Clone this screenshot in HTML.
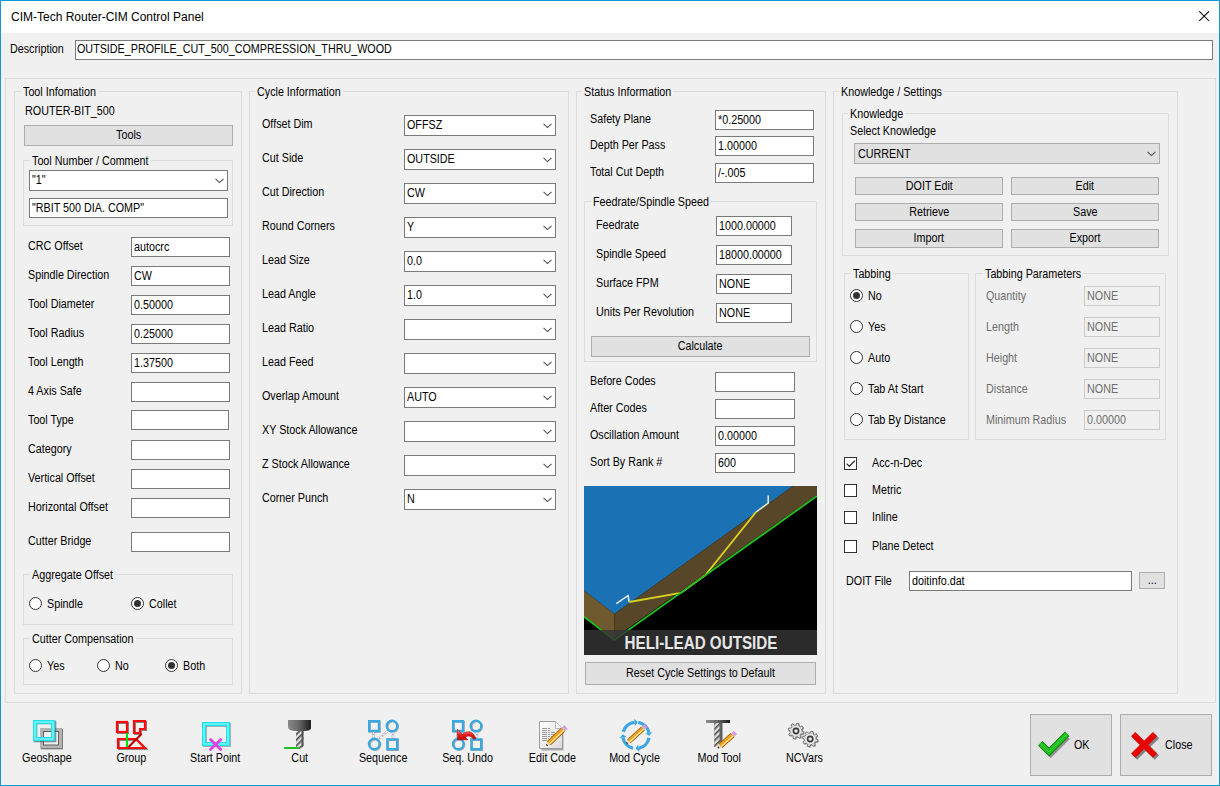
<!DOCTYPE html><html><head><meta charset="utf-8"><title>CIM-Tech Router-CIM Control Panel</title><style>
*{margin:0;padding:0;box-sizing:border-box}
html,body{width:1220px;height:786px;overflow:hidden;background:#f0f0f0}
body{position:relative;font-family:"Liberation Sans",sans-serif;color:#000}
.win{position:absolute;left:0;top:0;width:1220px;height:786px;background:#f0f0f0}
.bdr{position:absolute;left:0;top:0;width:1220px;height:786px;border:1px solid #1196d8;pointer-events:none}
.title{position:absolute;left:1px;top:1px;width:1218px;height:32px;background:#fff}
.t{position:absolute;white-space:nowrap;font-size:12.5px;line-height:14px;}
.t span{display:inline-block;transform:scaleX(0.86);transform-origin:0 0}
.tc{position:absolute;white-space:nowrap;font-size:12.5px;line-height:14px;text-align:center}
.tc span{display:inline-block;transform:scaleX(0.86);transform-origin:50% 0}
.lg{position:absolute;white-space:nowrap;font-size:12.5px;line-height:14px;background:#f0f0f0;padding:0 2px;color:#000}
.lg span{display:inline-block;transform:scaleX(0.86);transform-origin:0 0}
.grp{position:absolute;border:1px solid #dcdcdc}
.inp{position:absolute;border:1px solid #7a7a7a;background:#fff}
.dis{position:absolute;border:1px solid #cccccc;background:#f0f0f0}
.btn{position:absolute;border:1px solid #adadad;background:#e1e1e1}
.rad{position:absolute;width:13px;height:13px;border:1px solid #333;border-radius:50%;background:#fff}
.rad i{position:absolute;left:2px;top:2px;width:7px;height:7px;border-radius:50%;background:#333}
.chk{position:absolute;width:13px;height:13px;border:1px solid #333;background:#fff}
svg{display:block}
</style></head><body><div class="win">
<div class="title"></div>
<div class="t" style="left:11px;top:10px;font-size:12px;line-height:14px"><span style="transform:none">CIM-Tech Router-CIM Control Panel</span></div>
<svg style="position:absolute;left:1199px;top:11px" width="11" height="11" viewBox="0 0 11 11"><path d="M0.3 0.3 L10 10 M10 0.3 L0.3 10" stroke="#000" stroke-width="1.05"/></svg>
<div class="t" style="left:10px;top:42px;"><span>Description</span></div>
<div class="inp" style="left:75px;top:40px;width:1138px;height:20px;"></div>
<div class="t" style="left:77px;top:42px;"><span>OUTSIDE_PROFILE_CUT_500_COMPRESSION_THRU_WOOD</span></div>
<div class="grp" style="left:5px;top:78px;width:1211px;height:625px;"></div>
<div class="grp" style="left:14px;top:91px;width:228px;height:603px;"></div>
<div class="lg" style="left:21px;top:85px;width:76.9px;overflow:hidden"><span>Tool Infomation</span></div>
<div class="t" style="left:25px;top:104px;"><span>ROUTER-BIT_500</span></div>
<div class="btn" style="left:24px;top:125px;width:209px;height:21px;"></div>
<div class="tc" style="left:24px;width:209px;top:128px;"><span>Tools</span></div>
<div class="grp" style="left:23px;top:160px;width:210px;height:66px;"></div>
<div class="lg" style="left:30px;top:154px;width:120.5px;overflow:hidden"><span>Tool Number / Comment</span></div>
<div class="inp" style="left:29px;top:170px;width:199px;height:21px;"></div>
<div class="t" style="left:32px;top:173px;"><span>"1"</span></div>
<div style="position:absolute;left:215px;top:178px;width:9px;height:6px"><svg width="9" height="6" viewBox="0 0 9 6"><path d="M0.5 0.8 L4.5 4.6 L8.5 0.8" fill="none" stroke="#505050" stroke-width="1.1"/></svg></div>
<div class="inp" style="left:29px;top:198px;width:199px;height:20px;"></div>
<div class="t" style="left:32px;top:201px;"><span>"RBIT 500 DIA. COMP"</span></div>
<div class="t" style="left:28px;top:239px;"><span>CRC Offset</span></div>
<div class="inp" style="left:131px;top:237px;width:99px;height:20px;"></div>
<div class="t" style="left:134px;top:240px;"><span>autocrc</span></div>
<div class="t" style="left:28px;top:268px;"><span>Spindle Direction</span></div>
<div class="inp" style="left:131px;top:266px;width:99px;height:20px;"></div>
<div class="t" style="left:134px;top:269px;"><span>CW</span></div>
<div class="t" style="left:28px;top:297px;"><span>Tool Diameter</span></div>
<div class="inp" style="left:131px;top:295px;width:99px;height:20px;"></div>
<div class="t" style="left:134px;top:298px;"><span>0.50000</span></div>
<div class="t" style="left:28px;top:326px;"><span>Tool Radius</span></div>
<div class="inp" style="left:131px;top:324px;width:99px;height:20px;"></div>
<div class="t" style="left:134px;top:327px;"><span>0.25000</span></div>
<div class="t" style="left:28px;top:355px;"><span>Tool Length</span></div>
<div class="inp" style="left:131px;top:353px;width:99px;height:20px;"></div>
<div class="t" style="left:134px;top:356px;"><span>1.37500</span></div>
<div class="t" style="left:28px;top:384px;"><span>4 Axis Safe</span></div>
<div class="inp" style="left:131px;top:382px;width:99px;height:20px;"></div>
<div class="t" style="left:28px;top:413px;"><span>Tool Type</span></div>
<div class="inp" style="left:131px;top:410px;width:98px;height:20px;"></div>
<div class="t" style="left:28px;top:442px;"><span>Category</span></div>
<div class="inp" style="left:131px;top:440px;width:99px;height:20px;"></div>
<div class="t" style="left:28px;top:471px;"><span>Vertical Offset</span></div>
<div class="inp" style="left:131px;top:469px;width:99px;height:20px;"></div>
<div class="t" style="left:28px;top:500px;"><span>Horizontal Offset</span></div>
<div class="inp" style="left:131px;top:498px;width:99px;height:20px;"></div>
<div class="t" style="left:28px;top:534px;"><span>Cutter Bridge</span></div>
<div class="inp" style="left:131px;top:532px;width:99px;height:20px;"></div>
<div class="grp" style="left:23px;top:574px;width:210px;height:51px;"></div>
<div class="lg" style="left:30px;top:568px;width:85.1px;overflow:hidden"><span>Aggregate Offset</span></div>
<div class="rad" style="left:29px;top:597px"></div>
<div class="t" style="left:47px;top:597px;"><span>Spindle</span></div>
<div class="rad" style="left:131px;top:597px"><i></i></div>
<div class="t" style="left:149px;top:597px;"><span>Collet</span></div>
<div class="grp" style="left:23px;top:638px;width:210px;height:47px;"></div>
<div class="lg" style="left:30px;top:632px;width:105.6px;overflow:hidden"><span>Cutter Compensation</span></div>
<div class="rad" style="left:29px;top:659px"></div>
<div class="t" style="left:47px;top:659px;"><span>Yes</span></div>
<div class="rad" style="left:97px;top:659px"></div>
<div class="t" style="left:115px;top:659px;"><span>No</span></div>
<div class="rad" style="left:165px;top:659px"><i></i></div>
<div class="t" style="left:183px;top:659px;"><span>Both</span></div>
<div class="grp" style="left:249px;top:91px;width:320px;height:603px;"></div>
<div class="lg" style="left:255px;top:85px;width:87.6px;overflow:hidden"><span>Cycle Information</span></div>
<div class="t" style="left:262px;top:117px;"><span>Offset Dim</span></div>
<div class="inp" style="left:404px;top:115px;width:152px;height:21px;"></div>
<div class="t" style="left:407px;top:118px;"><span>OFFSZ</span></div>
<div style="position:absolute;left:543px;top:123px;width:9px;height:6px"><svg width="9" height="6" viewBox="0 0 9 6"><path d="M0.5 0.8 L4.5 4.6 L8.5 0.8" fill="none" stroke="#505050" stroke-width="1.1"/></svg></div>
<div class="t" style="left:262px;top:151px;"><span>Cut Side</span></div>
<div class="inp" style="left:404px;top:149px;width:152px;height:21px;"></div>
<div class="t" style="left:407px;top:152px;"><span>OUTSIDE</span></div>
<div style="position:absolute;left:543px;top:157px;width:9px;height:6px"><svg width="9" height="6" viewBox="0 0 9 6"><path d="M0.5 0.8 L4.5 4.6 L8.5 0.8" fill="none" stroke="#505050" stroke-width="1.1"/></svg></div>
<div class="t" style="left:262px;top:185px;"><span>Cut Direction</span></div>
<div class="inp" style="left:404px;top:183px;width:152px;height:21px;"></div>
<div class="t" style="left:407px;top:186px;"><span>CW</span></div>
<div style="position:absolute;left:543px;top:191px;width:9px;height:6px"><svg width="9" height="6" viewBox="0 0 9 6"><path d="M0.5 0.8 L4.5 4.6 L8.5 0.8" fill="none" stroke="#505050" stroke-width="1.1"/></svg></div>
<div class="t" style="left:262px;top:219px;"><span>Round Corners</span></div>
<div class="inp" style="left:404px;top:217px;width:152px;height:21px;"></div>
<div class="t" style="left:407px;top:220px;"><span>Y</span></div>
<div style="position:absolute;left:543px;top:225px;width:9px;height:6px"><svg width="9" height="6" viewBox="0 0 9 6"><path d="M0.5 0.8 L4.5 4.6 L8.5 0.8" fill="none" stroke="#505050" stroke-width="1.1"/></svg></div>
<div class="t" style="left:262px;top:253px;"><span>Lead Size</span></div>
<div class="inp" style="left:404px;top:251px;width:152px;height:21px;"></div>
<div class="t" style="left:407px;top:254px;"><span>0.0</span></div>
<div style="position:absolute;left:543px;top:259px;width:9px;height:6px"><svg width="9" height="6" viewBox="0 0 9 6"><path d="M0.5 0.8 L4.5 4.6 L8.5 0.8" fill="none" stroke="#505050" stroke-width="1.1"/></svg></div>
<div class="t" style="left:262px;top:287px;"><span>Lead Angle</span></div>
<div class="inp" style="left:404px;top:285px;width:152px;height:21px;"></div>
<div class="t" style="left:407px;top:288px;"><span>1.0</span></div>
<div style="position:absolute;left:543px;top:293px;width:9px;height:6px"><svg width="9" height="6" viewBox="0 0 9 6"><path d="M0.5 0.8 L4.5 4.6 L8.5 0.8" fill="none" stroke="#505050" stroke-width="1.1"/></svg></div>
<div class="t" style="left:262px;top:321px;"><span>Lead Ratio</span></div>
<div class="inp" style="left:404px;top:319px;width:152px;height:21px;"></div>
<div style="position:absolute;left:543px;top:327px;width:9px;height:6px"><svg width="9" height="6" viewBox="0 0 9 6"><path d="M0.5 0.8 L4.5 4.6 L8.5 0.8" fill="none" stroke="#505050" stroke-width="1.1"/></svg></div>
<div class="t" style="left:262px;top:355px;"><span>Lead Feed</span></div>
<div class="inp" style="left:404px;top:353px;width:152px;height:21px;"></div>
<div style="position:absolute;left:543px;top:361px;width:9px;height:6px"><svg width="9" height="6" viewBox="0 0 9 6"><path d="M0.5 0.8 L4.5 4.6 L8.5 0.8" fill="none" stroke="#505050" stroke-width="1.1"/></svg></div>
<div class="t" style="left:262px;top:389px;"><span>Overlap Amount</span></div>
<div class="inp" style="left:404px;top:387px;width:152px;height:21px;"></div>
<div class="t" style="left:407px;top:390px;"><span>AUTO</span></div>
<div style="position:absolute;left:543px;top:395px;width:9px;height:6px"><svg width="9" height="6" viewBox="0 0 9 6"><path d="M0.5 0.8 L4.5 4.6 L8.5 0.8" fill="none" stroke="#505050" stroke-width="1.1"/></svg></div>
<div class="t" style="left:262px;top:423px;"><span>XY Stock Allowance</span></div>
<div class="inp" style="left:404px;top:421px;width:152px;height:21px;"></div>
<div style="position:absolute;left:543px;top:429px;width:9px;height:6px"><svg width="9" height="6" viewBox="0 0 9 6"><path d="M0.5 0.8 L4.5 4.6 L8.5 0.8" fill="none" stroke="#505050" stroke-width="1.1"/></svg></div>
<div class="t" style="left:262px;top:457px;"><span>Z Stock Allowance</span></div>
<div class="inp" style="left:404px;top:455px;width:152px;height:21px;"></div>
<div style="position:absolute;left:543px;top:463px;width:9px;height:6px"><svg width="9" height="6" viewBox="0 0 9 6"><path d="M0.5 0.8 L4.5 4.6 L8.5 0.8" fill="none" stroke="#505050" stroke-width="1.1"/></svg></div>
<div class="t" style="left:262px;top:491px;"><span>Corner Punch</span></div>
<div class="inp" style="left:404px;top:489px;width:152px;height:21px;"></div>
<div class="t" style="left:407px;top:492px;"><span>N</span></div>
<div style="position:absolute;left:543px;top:497px;width:9px;height:6px"><svg width="9" height="6" viewBox="0 0 9 6"><path d="M0.5 0.8 L4.5 4.6 L8.5 0.8" fill="none" stroke="#505050" stroke-width="1.1"/></svg></div>
<div class="grp" style="left:576px;top:91px;width:250px;height:603px;"></div>
<div class="lg" style="left:582px;top:85px;width:91.2px;overflow:hidden"><span>Status Information</span></div>
<div class="t" style="left:590px;top:112px;"><span>Safety Plane</span></div>
<div class="inp" style="left:715px;top:110px;width:99px;height:20px;"></div>
<div class="t" style="left:718px;top:113px;"><span>*0.25000</span></div>
<div class="t" style="left:590px;top:138px;"><span>Depth Per Pass</span></div>
<div class="inp" style="left:715px;top:136px;width:99px;height:20px;"></div>
<div class="t" style="left:718px;top:139px;"><span>1.00000</span></div>
<div class="t" style="left:590px;top:165px;"><span>Total Cut Depth</span></div>
<div class="inp" style="left:715px;top:163px;width:99px;height:20px;"></div>
<div class="t" style="left:718px;top:166px;"><span>/-.005</span></div>
<div class="grp" style="left:584px;top:201px;width:233px;height:161px;"></div>
<div class="lg" style="left:591px;top:195px;width:120.0px;overflow:hidden"><span>Feedrate/Spindle Speed</span></div>
<div class="t" style="left:596px;top:218px;"><span>Feedrate</span></div>
<div class="inp" style="left:716px;top:216px;width:76px;height:20px;"></div>
<div class="t" style="left:719px;top:219px;"><span>1000.00000</span></div>
<div class="t" style="left:596px;top:247px;"><span>Spindle Speed</span></div>
<div class="inp" style="left:716px;top:245px;width:76px;height:20px;"></div>
<div class="t" style="left:719px;top:248px;"><span>18000.00000</span></div>
<div class="t" style="left:596px;top:276px;"><span>Surface FPM</span></div>
<div class="inp" style="left:716px;top:274px;width:76px;height:20px;"></div>
<div class="t" style="left:719px;top:277px;"><span>NONE</span></div>
<div class="t" style="left:596px;top:305px;"><span>Units Per Revolution</span></div>
<div class="inp" style="left:716px;top:303px;width:76px;height:20px;"></div>
<div class="t" style="left:719px;top:306px;"><span>NONE</span></div>
<div class="btn" style="left:591px;top:336px;width:219px;height:21px;"></div>
<div class="tc" style="left:591px;width:219px;top:339px;"><span>Calculate</span></div>
<div class="t" style="left:590px;top:374px;"><span>Before Codes</span></div>
<div class="inp" style="left:715px;top:372px;width:80px;height:20px;"></div>
<div class="t" style="left:590px;top:401px;"><span>After Codes</span></div>
<div class="inp" style="left:715px;top:399px;width:80px;height:20px;"></div>
<div class="t" style="left:590px;top:428px;"><span>Oscillation Amount</span></div>
<div class="inp" style="left:715px;top:426px;width:80px;height:20px;"></div>
<div class="t" style="left:718px;top:429px;"><span>0.00000</span></div>
<div class="t" style="left:590px;top:455px;"><span>Sort By Rank #</span></div>
<div class="inp" style="left:715px;top:453px;width:80px;height:20px;"></div>
<div class="t" style="left:718px;top:456px;"><span>600</span></div>
<svg style="position:absolute;left:584px;top:486px" width="233" height="169" viewBox="0 0 233 169">
<rect x="0" y="0" width="233" height="169" fill="#000"/>
<polygon points="0,0 209,0 30.3,128 0,104.6" fill="#1a72b4"/>
<polygon points="0,104.6 30.3,128 30.3,152 0,130.7" fill="#6f5a30"/>
<polygon points="30.3,128 209,0 233,0 233,9 30.3,152" fill="#574627"/>
<polyline points="32.2,117.7 44.1,109.6 45.2,116" fill="none" stroke="#d8e6ec" stroke-width="1.6"/>
<polyline points="45.2,116 96.8,107 121.5,89 171.9,26.1" fill="none" stroke="#d6cf22" stroke-width="1.8"/>
<polyline points="171.9,26.1 184.2,17.2 184.2,9.6" fill="none" stroke="#dfe8c8" stroke-width="1.6"/>
<polyline points="0,130.7 30.3,154 233,10" fill="none" stroke="#1fc01f" stroke-width="1.8"/>
<rect x="0" y="144" width="233" height="25" fill="rgba(52,52,52,0.82)"/>
<text x="117" y="163" text-anchor="middle" font-family="Liberation Sans" font-weight="bold" font-size="18" fill="#e6e6e6" transform="translate(117 0) scale(0.845 1) translate(-117 0)">HELI-LEAD OUTSIDE</text>
</svg>

<div class="btn" style="left:585px;top:662px;width:231px;height:23px;"></div>
<div class="tc" style="left:585px;width:231px;top:666px;"><span>Reset Cycle Settings to Default</span></div>
<div class="grp" style="left:833px;top:91px;width:345px;height:603px;"></div>
<div class="lg" style="left:839px;top:85px;width:105.0px;overflow:hidden"><span>Knowledge / Settings</span></div>
<div class="grp" style="left:842px;top:113px;width:327px;height:143px;"></div>
<div class="lg" style="left:848px;top:107px;width:57.2px;overflow:hidden"><span>Knowledge</span></div>
<div class="t" style="left:850px;top:124px;"><span>Select Knowledge</span></div>
<div class="btn" style="left:854px;top:143px;width:306px;height:21px;"></div>
<div class="t" style="left:858px;top:147px;"><span>CURRENT</span></div>
<div style="position:absolute;left:1147px;top:151px;width:9px;height:6px"><svg width="9" height="6" viewBox="0 0 9 6"><path d="M0.5 0.8 L4.5 4.6 L8.5 0.8" fill="none" stroke="#505050" stroke-width="1.1"/></svg></div>
<div class="btn" style="left:855px;top:177px;width:148px;height:18px;"></div>
<div class="tc" style="left:855px;width:148px;top:179px;"><span>DOIT Edit</span></div>
<div class="btn" style="left:1011px;top:177px;width:148px;height:18px;"></div>
<div class="tc" style="left:1011px;width:148px;top:179px;"><span>Edit</span></div>
<div class="btn" style="left:855px;top:203px;width:148px;height:18px;"></div>
<div class="tc" style="left:855px;width:148px;top:205px;"><span>Retrieve</span></div>
<div class="btn" style="left:1011px;top:203px;width:148px;height:18px;"></div>
<div class="tc" style="left:1011px;width:148px;top:205px;"><span>Save</span></div>
<div class="btn" style="left:855px;top:229px;width:148px;height:19px;"></div>
<div class="tc" style="left:855px;width:148px;top:231px;"><span>Import</span></div>
<div class="btn" style="left:1011px;top:229px;width:148px;height:19px;"></div>
<div class="tc" style="left:1011px;width:148px;top:231px;"><span>Export</span></div>
<div class="grp" style="left:844px;top:273px;width:125px;height:167px;"></div>
<div class="lg" style="left:851px;top:267px;width:41.7px;overflow:hidden"><span>Tabbing</span></div>
<div class="rad" style="left:850px;top:289px"><i></i></div>
<div class="t" style="left:868px;top:289px;"><span>No</span></div>
<div class="rad" style="left:850px;top:320px"></div>
<div class="t" style="left:868px;top:320px;"><span>Yes</span></div>
<div class="rad" style="left:850px;top:351px"></div>
<div class="t" style="left:868px;top:351px;"><span>Auto</span></div>
<div class="rad" style="left:850px;top:382px"></div>
<div class="t" style="left:868px;top:382px;"><span>Tab At Start</span></div>
<div class="rad" style="left:850px;top:413px"></div>
<div class="t" style="left:868px;top:413px;"><span>Tab By Distance</span></div>
<div class="grp" style="left:975px;top:273px;width:191px;height:167px;"></div>
<div class="lg" style="left:983px;top:267px;width:100.2px;overflow:hidden"><span>Tabbing Parameters</span></div>
<div class="t" style="left:986px;top:289px;color:#6d6d6d;"><span>Quantity</span></div>
<div class="dis" style="left:1084px;top:286px;width:76px;height:20px;"></div>
<div class="t" style="left:1087px;top:289px;color:#6d6d6d;"><span>NONE</span></div>
<div class="t" style="left:986px;top:320px;color:#6d6d6d;"><span>Length</span></div>
<div class="dis" style="left:1084px;top:317px;width:76px;height:20px;"></div>
<div class="t" style="left:1087px;top:320px;color:#6d6d6d;"><span>NONE</span></div>
<div class="t" style="left:986px;top:351px;color:#6d6d6d;"><span>Height</span></div>
<div class="dis" style="left:1084px;top:348px;width:76px;height:20px;"></div>
<div class="t" style="left:1087px;top:351px;color:#6d6d6d;"><span>NONE</span></div>
<div class="t" style="left:986px;top:382px;color:#6d6d6d;"><span>Distance</span></div>
<div class="dis" style="left:1084px;top:379px;width:76px;height:20px;"></div>
<div class="t" style="left:1087px;top:382px;color:#6d6d6d;"><span>NONE</span></div>
<div class="t" style="left:986px;top:413px;color:#6d6d6d;"><span>Minimum Radius</span></div>
<div class="dis" style="left:1084px;top:410px;width:76px;height:20px;"></div>
<div class="t" style="left:1087px;top:413px;color:#6d6d6d;"><span>0.00000</span></div>
<div class="chk" style="left:844px;top:457px"><svg width="11" height="11" viewBox="0 0 11 11" style="position:absolute;left:0;top:0"><path d="M1.6 5.6 L4.3 8.3 L9.8 2.8" fill="none" stroke="#333" stroke-width="1.3"/></svg></div>
<div class="t" style="left:872px;top:456px;"><span>Acc-n-Dec</span></div>
<div class="chk" style="left:844px;top:484px"></div>
<div class="t" style="left:872px;top:483px;"><span>Metric</span></div>
<div class="chk" style="left:844px;top:511px"></div>
<div class="t" style="left:872px;top:510px;"><span>Inline</span></div>
<div class="chk" style="left:844px;top:540px"></div>
<div class="t" style="left:872px;top:539px;"><span>Plane Detect</span></div>
<div class="t" style="left:846px;top:574px;"><span>DOIT File</span></div>
<div class="inp" style="left:909px;top:571px;width:223px;height:20px;"></div>
<div class="t" style="left:912px;top:574px;"><span>doitinfo.dat</span></div>
<div class="btn" style="left:1139px;top:572px;width:26px;height:17px;"></div>
<div class="tc" style="left:1139px;width:26px;top:573px;"><span>...</span></div>
<svg style="position:absolute;left:0;top:700px" width="1220" height="86" viewBox="0 700 1220 86">
<defs>
<linearGradient id="collet" x1="0" y1="0" x2="1" y2="0"><stop offset="0" stop-color="#8a8a8a"/><stop offset="0.45" stop-color="#6a6a6a"/><stop offset="1" stop-color="#1e1e1e"/></linearGradient>
<linearGradient id="tbar" x1="0" y1="0" x2="1" y2="0"><stop offset="0" stop-color="#909090"/><stop offset="0.5" stop-color="#666"/><stop offset="1" stop-color="#1a1a1a"/></linearGradient>
<pattern id="flute" width="4" height="4" patternUnits="userSpaceOnUse" patternTransform="rotate(-45)"><rect width="4" height="4" fill="#e0e0e0"/><rect width="4" height="1.6" fill="#4a4a4a"/></pattern>
<linearGradient id="pen" x1="0" y1="0" x2="1" y2="1"><stop offset="0" stop-color="#fff6c0"/><stop offset="0.5" stop-color="#f6a81c"/><stop offset="1" stop-color="#d07800"/></linearGradient>
<linearGradient id="redarr" x1="0" y1="0" x2="0" y2="1"><stop offset="0" stop-color="#ff9a9a"/><stop offset="0.5" stop-color="#e82020"/><stop offset="1" stop-color="#c00000"/></linearGradient>
<linearGradient id="doc" x1="0" y1="0" x2="1" y2="1"><stop offset="0" stop-color="#ffffff"/><stop offset="1" stop-color="#dcdcdc"/></linearGradient>
</defs>
<!-- Geoshape -->
<rect x="42.3" y="730.3" width="19" height="17.5" fill="none" stroke="#5a5a5a" stroke-width="3"/>
<rect x="41.7" y="729.7" width="18.6" height="17" fill="none" stroke="#b4b4b4" stroke-width="3.4"/>
<rect x="43.5" y="731.5" width="15" height="13.5" fill="none" stroke="#606060" stroke-width="1"/>
<rect x="35.5" y="722.5" width="19" height="18" fill="none" stroke="#3a5060" stroke-width="3.6" opacity="0.6"/>
<rect x="35" y="722" width="18" height="17" fill="none" stroke="#1ee0ea" stroke-width="4"/>
<rect x="35" y="722" width="18" height="17" fill="none" stroke="#8ffcff" stroke-width="1.2"/>
<!-- Group -->
<g fill="none" stroke="#303030" stroke-width="2" opacity="0.55" transform="translate(1 1)">
<rect x="117" y="722" width="10" height="10"/>
<path d="M134 721 H145 V729 H140 V733 H134 Z"/>
<path d="M118 739 H136 L145 748 H118 Z"/>
</g>
<g fill="none" stroke="#ff0a0a" stroke-width="2.2">
<rect x="117" y="722" width="10" height="10"/>
<path d="M134 721 H145 V729 H140 V733 H134 Z"/>
<path d="M118 739 H136 L145 748 H118 Z"/>
</g>
<path d="M128.5 747 L141.5 734" stroke="#b80000" stroke-width="2.2"/>
<path d="M127 733 V747" stroke="#00e000" stroke-width="2"/>
<!-- Start Point -->
<rect x="205" y="725" width="24" height="20" fill="none" stroke="#3a5060" stroke-width="3.5" opacity="0.55"/>
<rect x="204" y="724" width="24" height="20" fill="none" stroke="#1ee0ea" stroke-width="4"/>
<rect x="204" y="724" width="24" height="20" fill="none" stroke="#8ffcff" stroke-width="1.2"/>
<path d="M210.5 739.5 L220.7 749.5 M220.7 739.5 L210.5 749.5" stroke="#e040e0" stroke-width="2.8" stroke-linecap="round"/>
<!-- Cut -->
<path d="M288 720 H311 V728 Q311 731 304 731 H297 Q288 731 288 727 Z" fill="url(#collet)"/>
<path d="M296 731 H303.5 V746 L300 749 H296 Z" fill="url(#flute)"/>
<path d="M301.5 731 H303.5 V746 L301.5 748 Z" fill="#555"/>
<path d="M285 748 H298.5" stroke="#20c020" stroke-width="2.2" stroke-linecap="round"/>
<!-- Sequence -->
<g id="seq">
<g fill="none" stroke="#555" stroke-width="2" opacity="0.45" transform="translate(0.8 0.8)">
<rect x="369" y="721" width="10" height="10"/><circle cx="392" cy="726" r="5.2"/><circle cx="374.3" cy="744" r="5.2"/><rect x="387.2" y="739.2" width="10" height="10"/>
</g>
<g fill="none" stroke="#8a8a8a" stroke-width="2.4" opacity="0.6">
<path d="M373.5 731.5 V738.5"/><path d="M377.5 740.5 L389 729.5"/><path d="M393 731.5 V738.5"/>
</g>
<g fill="none" stroke="#ffffff" stroke-width="1.3" stroke-dasharray="2.5 1.2">
<path d="M373.5 731.5 V738.5"/><path d="M377.5 740.5 L389 729.5"/><path d="M393 731.5 V738.5"/>
<path d="M374 725 V729"/><path d="M392.5 742 V746"/><path d="M374.2 742 V746"/><path d="M392 722.5 L394.5 720.5"/>
</g>
<g fill="none" stroke="#3aa8e0" stroke-width="2.4">
<rect x="369.2" y="721.2" width="9.8" height="9.8"/><circle cx="392" cy="726" r="5.3"/><circle cx="374.3" cy="744" r="5.3"/><rect x="387.4" y="739.4" width="9.8" height="9.8"/>
</g>
</g>
<use href="#seq" transform="translate(84 0)"/>
<path d="M457.5 729.3 L462.5 734.3 C466 730.5 472.5 729.8 476 738.6 L473.6 739.2 C471 735.6 467.8 735.2 465.4 737.2 L468 739.8 L457.5 739.8 Z" fill="url(#redarr)" stroke="#a00000" stroke-width="0.5"/>
<!-- Edit Code -->
<path d="M540.5 722.5 H555.5 L562.5 729.5 V749.5 H540.5 Z" fill="#555" opacity="0.45" transform="translate(1 1)"/>
<path d="M539.5 721.5 H555.5 L562.5 728.5 V748.5 H539.5 Z" fill="url(#doc)" stroke="#9a9a9a" stroke-width="1"/>
<path d="M555.5 721.5 V728.5 H562.5" fill="#f4f4f4" stroke="#aaa" stroke-width="0.8"/>
<g stroke="#9a9a9a" stroke-width="1" stroke-dasharray="5 1 2 1"><path d="M542 728.5 H550"/><path d="M542 730.5 H550"/><path d="M542 732.5 H555"/><path d="M542 734.5 H554"/><path d="M542 736.5 H553"/><path d="M542 738.5 H549"/><path d="M542 740.5 H548"/></g>
<path d="M548.82 743.30 L563.10 729.75" stroke="#9a5200" stroke-width="5.50"/>
<path d="M548.82 743.30 L563.10 729.75" stroke="#f5a020" stroke-width="4.20"/>
<path d="M549.44 743.95 L563.72 730.41" stroke="#fff2b0" stroke-width="1.1"/>
<path d="M546.50 745.50 L550.27 744.82 L547.38 741.77 Z" fill="#f0d8a0"/>
<path d="M546.50 745.50 L547.44 744.61" stroke="#333" stroke-width="2"/>
<path d="M563.10 729.75 L564.26 728.65" stroke="#c0c0c0" stroke-width="5.00"/>
<path d="M564.26 728.65 L566.00 727.00" stroke="#e08ee0" stroke-width="4.60" stroke-linecap="butt"/>
<!-- Mod Cycle -->
<g fill="none" stroke="#3ba5e5" stroke-width="3.3"><path d="M623.31 731.76 A13.2 13.2 0 0 1 634.62 722.27"/><path d="M638.29 722.40 A13.2 13.2 0 0 1 648.91 732.66"/><path d="M649.00 737.69 A13.2 13.2 0 0 1 638.74 748.31"/><path d="M633.03 748.26 A13.2 13.2 0 0 1 622.96 737.46"/></g><g fill="#3ba5e5"><path d="M637.84 722.33 L634.24 718.69 L635.00 725.85 Z"/><path d="M649.19 735.86 L652.43 731.91 L645.39 733.40 Z"/><path d="M635.54 748.59 L639.49 751.83 L638.00 744.79 Z"/><path d="M622.85 734.25 L619.41 738.03 L626.52 736.90 Z"/></g>
<path d="M628.87 741.35 L643.04 728.49" stroke="#9a5200" stroke-width="5.10"/>
<path d="M628.87 741.35 L643.04 728.49" stroke="#f5a020" stroke-width="3.80"/>
<path d="M629.47 742.02 L643.64 729.15" stroke="#fff2b0" stroke-width="1.1"/>
<path d="M626.50 743.50 L630.15 742.76 L627.59 739.94 Z" fill="#f0d8a0"/>
<path d="M626.50 743.50 L627.46 742.63" stroke="#333" stroke-width="2"/>
<path d="M643.04 728.49 L644.22 727.41" stroke="#c0c0c0" stroke-width="4.60"/>
<path d="M644.22 727.41 L646.00 725.80" stroke="#e08ee0" stroke-width="4.20" stroke-linecap="butt"/>
<!-- Mod Tool -->
<rect x="706" y="720" width="24" height="3" fill="url(#tbar)"/>
<rect x="714.5" y="723" width="8" height="24" fill="#606060"/>
<path d="M714.5 723 H719.5 V747 H714.5 Z" fill="url(#flute)"/>
<path d="M720.40 745.88 L732.51 735.15" stroke="#9a5200" stroke-width="5.50"/>
<path d="M720.40 745.88 L732.51 735.15" stroke="#f5a020" stroke-width="4.20"/>
<path d="M720.99 746.55 L733.10 735.83" stroke="#fff2b0" stroke-width="1.1"/>
<path d="M718.00 748.00 L721.79 747.45 L719.00 744.31 Z" fill="#f0d8a0"/>
<path d="M718.00 748.00 L718.97 747.14" stroke="#333" stroke-width="2"/>
<path d="M732.51 735.15 L733.70 734.09" stroke="#c0c0c0" stroke-width="5.00"/>
<path d="M733.70 734.09 L735.50 732.50" stroke="#e08ee0" stroke-width="4.60" stroke-linecap="butt"/>
<!-- NCVars -->
<path d="M802.00 731.00 L803.86 731.74 L803.30 734.02 L801.30 733.81 L800.24 735.24 L801.04 737.09 L799.02 738.30 L797.76 736.73 L796.00 737.00 L795.26 738.86 L792.98 738.30 L793.19 736.30 L791.76 735.24 L789.91 736.04 L788.70 734.02 L790.27 732.76 L790.00 731.00 L788.14 730.26 L788.70 727.98 L790.70 728.19 L791.76 726.76 L790.96 724.91 L792.98 723.70 L794.24 725.27 L796.00 725.00 L796.74 723.14 L799.02 723.70 L798.81 725.70 L800.24 726.76 L802.09 725.96 L803.30 727.98 L801.73 729.24 Z" fill="#606060" transform="translate(0.8 0.8)" opacity="0.7"/>
<path d="M802.00 731.00 L803.86 731.74 L803.30 734.02 L801.30 733.81 L800.24 735.24 L801.04 737.09 L799.02 738.30 L797.76 736.73 L796.00 737.00 L795.26 738.86 L792.98 738.30 L793.19 736.30 L791.76 735.24 L789.91 736.04 L788.70 734.02 L790.27 732.76 L790.00 731.00 L788.14 730.26 L788.70 727.98 L790.70 728.19 L791.76 726.76 L790.96 724.91 L792.98 723.70 L794.24 725.27 L796.00 725.00 L796.74 723.14 L799.02 723.70 L798.81 725.70 L800.24 726.76 L802.09 725.96 L803.30 727.98 L801.73 729.24 Z" fill="#d6d6d6" stroke="#707070" stroke-width="0.9"/>
<circle cx="796" cy="731" r="4.2" fill="none" stroke="#f4f4f4" stroke-width="1"/>
<circle cx="796" cy="731" r="2.6" fill="#e8e8e8" stroke="#3a3a3a" stroke-width="1.6"/>
<path d="M816.20 739.00 L818.06 739.74 L817.50 742.02 L815.50 741.81 L814.44 743.24 L815.24 745.09 L813.22 746.30 L811.96 744.73 L810.20 745.00 L809.46 746.86 L807.18 746.30 L807.39 744.30 L805.96 743.24 L804.11 744.04 L802.90 742.02 L804.47 740.76 L804.20 739.00 L802.34 738.26 L802.90 735.98 L804.90 736.19 L805.96 734.76 L805.16 732.91 L807.18 731.70 L808.44 733.27 L810.20 733.00 L810.94 731.14 L813.22 731.70 L813.01 733.70 L814.44 734.76 L816.29 733.96 L817.50 735.98 L815.93 737.24 Z" fill="#606060" transform="translate(0.8 0.8)" opacity="0.7"/>
<path d="M816.20 739.00 L818.06 739.74 L817.50 742.02 L815.50 741.81 L814.44 743.24 L815.24 745.09 L813.22 746.30 L811.96 744.73 L810.20 745.00 L809.46 746.86 L807.18 746.30 L807.39 744.30 L805.96 743.24 L804.11 744.04 L802.90 742.02 L804.47 740.76 L804.20 739.00 L802.34 738.26 L802.90 735.98 L804.90 736.19 L805.96 734.76 L805.16 732.91 L807.18 731.70 L808.44 733.27 L810.20 733.00 L810.94 731.14 L813.22 731.70 L813.01 733.70 L814.44 734.76 L816.29 733.96 L817.50 735.98 L815.93 737.24 Z" fill="#d6d6d6" stroke="#707070" stroke-width="0.9"/>
<circle cx="810.2" cy="739" r="4.2" fill="none" stroke="#f4f4f4" stroke-width="1"/>
<circle cx="810.2" cy="739" r="2.6" fill="#e8e8e8" stroke="#3a3a3a" stroke-width="1.6"/>
</svg>

<div class="tc" style="left:7px;width:80px;top:751px;"><span>Geoshape</span></div>
<div class="tc" style="left:91px;width:80px;top:751px;"><span>Group</span></div>
<div class="tc" style="left:175px;width:80px;top:751px;"><span>Start Point</span></div>
<div class="tc" style="left:260px;width:80px;top:751px;"><span>Cut</span></div>
<div class="tc" style="left:343px;width:80px;top:751px;"><span>Sequence</span></div>
<div class="tc" style="left:428px;width:80px;top:751px;"><span>Seq. Undo</span></div>
<div class="tc" style="left:512px;width:80px;top:751px;"><span>Edit Code</span></div>
<div class="tc" style="left:595px;width:80px;top:751px;"><span>Mod Cycle</span></div>
<div class="tc" style="left:679px;width:80px;top:751px;"><span>Mod Tool</span></div>
<div class="tc" style="left:764px;width:80px;top:751px;"><span>NCVars</span></div>
<div class="btn" style="left:1030px;top:714px;width:82px;height:62px;"></div>
<div class="tc" style="left:1030px;width:82px;top:738px;"><span></span></div>
<div class="btn" style="left:1120px;top:714px;width:92px;height:62px;"></div>
<div class="tc" style="left:1120px;width:92px;top:738px;"><span></span></div>
<div class="t" style="left:1074px;top:738px;"><span>OK</span></div>
<div class="t" style="left:1165px;top:738px;"><span>Close</span></div>
<svg style="position:absolute;left:1030px;top:714px" width="182" height="62" viewBox="1030 714 182 62">
<path d="M1042 745 L1050 753 L1067 736" fill="none" stroke="#404040" stroke-width="6" stroke-linejoin="miter" opacity="0.5" transform="translate(0.8 0.8)"/>
<path d="M1040.3 743.3 L1049 752 L1067.2 733.8" fill="none" stroke="#0d7d0d" stroke-width="6.2" stroke-linejoin="miter" stroke-linecap="butt"/>
<path d="M1040.3 743.3 L1049 752 L1067.2 733.8" fill="none" stroke="#1fbf1f" stroke-width="4.6" stroke-linejoin="miter" stroke-linecap="butt"/>
<path d="M1040.3 743.3 L1049 752 L1067.2 733.8" fill="none" stroke="#55e055" stroke-width="1" opacity="0.6"/>
<path d="M1134 735 L1156 756.5 M1156 735 L1134 756.5" stroke="#333" stroke-width="6" opacity="0.55" transform="translate(1 1)"/>
<path d="M1133.2 734.2 L1155 755.6 M1155 734.2 L1133.2 755.6" stroke="#e60000" stroke-width="6"/>
</svg>

<div class="bdr"></div></div></body></html>
